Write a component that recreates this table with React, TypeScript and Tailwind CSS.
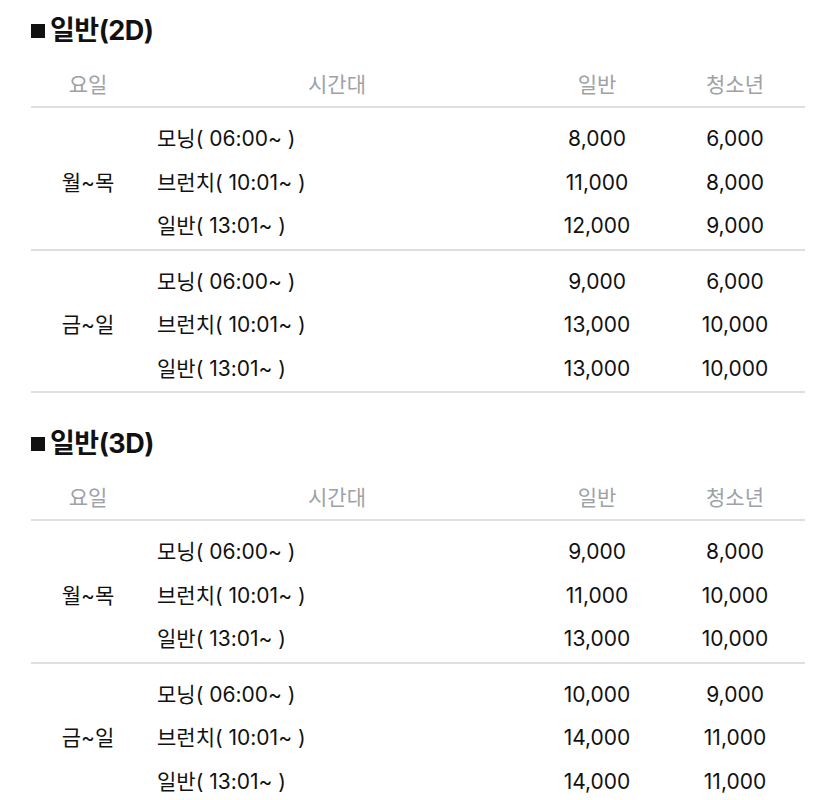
const sections = [
  {
    title: "일반(2D)",
    groups: [
      {
        day: "월~목",
        rows: [
          ["모닝( 06:00~ )", "8,000", "6,000"],
          ["브런치( 10:01~ )", "11,000", "8,000"],
          ["일반( 13:01~ )", "12,000", "9,000"],
        ],
      },
      {
        day: "금~일",
        rows: [
          ["모닝( 06:00~ )", "9,000", "6,000"],
          ["브런치( 10:01~ )", "13,000", "10,000"],
          ["일반( 13:01~ )", "13,000", "10,000"],
        ],
      },
    ],
  },
  {
    title: "일반(3D)",
    groups: [
      {
        day: "월~목",
        rows: [
          ["모닝( 06:00~ )", "9,000", "8,000"],
          ["브런치( 10:01~ )", "11,000", "10,000"],
          ["일반( 13:01~ )", "13,000", "10,000"],
        ],
      },
      {
        day: "금~일",
        rows: [
          ["모닝( 06:00~ )", "10,000", "9,000"],
          ["브런치( 10:01~ )", "14,000", "11,000"],
          ["일반( 13:01~ )", "14,000", "11,000"],
        ],
      },
    ],
  },
];

const cols = "grid grid-cols-[114px_384px_136px_140px]";

export default function App() {
  return (
    <div className="min-h-screen bg-white pl-[31px] pr-[26px] pt-[15px] font-['Inter','Noto_Sans_CJK_KR',sans-serif] text-[#111]">
      {sections.map((s, si) => (
        <section key={si} className={si > 0 ? "mt-[35px]" : ""}>
          <h2 className="flex h-[32px] items-center gap-[5px] text-[27px] font-bold tracking-[-0.5px]">
            <span className="block h-[14px] w-[14px] bg-[#111]" />
            {s.title}
          </h2>
          <div className={`${cols} mt-[17px] h-[44px] items-center border-b-2 border-[#dedfe1] text-[21px] text-[#9ea2a7]`}>
            <div className="text-center">요일</div>
            <div className="text-center">시간대</div>
            <div className="text-center">일반</div>
            <div className="text-center">청소년</div>
          </div>
          {s.groups.map((g, gi) => (
            <div key={gi} className={`${cols} border-b-2 border-[#dedfe1] pt-[9px] pb-[1px] text-[21px]`}>
              <div className="row-span-3 flex items-center justify-center">{g.day}</div>
              {g.rows.map((r, ri) => (
                <div key={ri} className="contents">
                  <div className="flex h-[43.5px] items-center pl-[12px]">{r[0]}</div>
                  <div className="flex h-[43.5px] items-center justify-center">{r[1]}</div>
                  <div className="flex h-[43.5px] items-center justify-center">{r[2]}</div>
                </div>
              ))}
            </div>
          ))}
        </section>
      ))}
    </div>
  );
}
